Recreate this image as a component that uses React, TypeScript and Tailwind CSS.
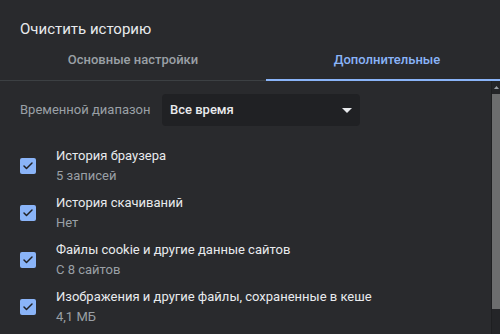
import { Check } from "lucide-react";

const items = [
  { title: "История браузера", sub: "5 записей" },
  { title: "История скачиваний", sub: "Нет" },
  { title: "Файлы cookie и другие данные сайтов", sub: "С 8 сайтов" },
  { title: "Изображения и другие файлы, сохраненные в кеше", sub: "4,1 МБ" },
];

export default function App() {
  return (
    <div
      className="w-[500px] h-[334px] bg-[#292a2d] text-[#e8eaed] overflow-hidden flex flex-col"
      style={{ fontFamily: "Roboto, 'Noto Sans', sans-serif" }}
    >
      {/* Title */}
      <div className="px-5 pt-[19px] h-[40px] text-[15px] leading-[20px]">Очистить историю</div>

      {/* Tabs */}
      <div className="flex h-[41px] border-b border-[#3c4043]">
        <div className="w-[266px] flex items-center justify-center text-[13px] font-medium text-[#9aa0a6]">
          Основные настройки
        </div>
        <div className="flex-1 flex items-center justify-center text-[13px] font-medium text-[#8ab4f8] pl-[8px] relative">
          Дополнительные
          <div className="absolute left-0 right-0 bottom-[-1px] h-[2px] bg-[#8ab4f8]" />
        </div>
      </div>

      {/* Content */}
      <div className="flex flex-1 min-h-0">
        <div className="flex-1 pl-5 pt-[13px]">
          <div className="flex items-center h-[32px]">
            <div className="w-[142px] text-[13px] text-[#9aa0a6]">Временной диапазон</div>
            <div className="w-[198px] h-[32px] bg-[#202124] rounded-[4px] flex items-center justify-between pl-[8px] pr-[8px]">
              <span className="text-[13px] font-medium text-[#e8eaed]">Все время</span>
              <svg width="10" height="5" viewBox="0 0 10 5">
                <path d="M0 0 L10 0 L5 5 Z" fill="#e8eaed" />
              </svg>
            </div>
          </div>

          <div className="flex flex-col mt-[20px] gap-[7px]">
            {items.map((item, i) => (
              <div key={i} className="flex items-center h-[40px]">
                <div className="w-[16px] h-[16px] bg-[#8ab4f8] rounded-[2px] flex items-center justify-center mr-[20px]">
                  <Check size={12} strokeWidth={3} className="text-[#202124]" />
                </div>
                <div className="flex flex-col">
                  <span className="text-[13px] leading-[20px] text-[#e8eaed]">{item.title}</span>
                  <span className="text-[13px] leading-[20px] text-[#9aa0a6]">{item.sub}</span>
                </div>
              </div>
            ))}
          </div>
        </div>

        {/* Scrollbar */}
        <div className="w-[9px] bg-[#242528] border-l border-[#1e1f21] flex flex-col">
          <div className="h-[13px] flex items-center justify-center">
            <svg width="5" height="3" viewBox="0 0 5 3">
              <path d="M0 3 L2.5 0 L5 3 Z" fill="#9aa0a6" />
            </svg>
          </div>
          <div className="h-[215px] bg-[#6c6d6e]" />
        </div>
      </div>
    </div>
  );
}
